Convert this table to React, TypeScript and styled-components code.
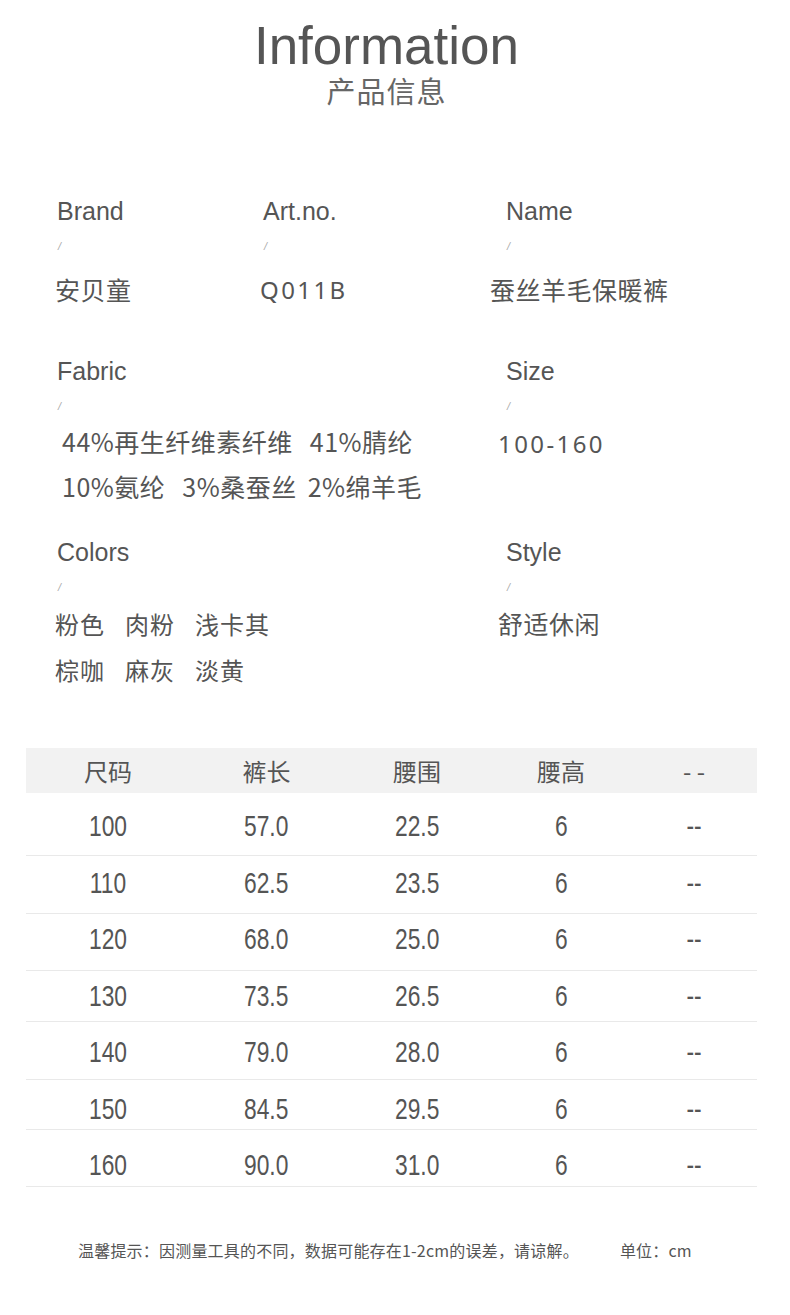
import styled, { createGlobalStyle } from "styled-components";

const GlobalStyle = createGlobalStyle`
  body {
    margin: 0;
    background: #ffffff;
    font-family: "Liberation Sans", "Noto Sans CJK SC", sans-serif;
    color: #555555;
  }
`;

const cjk = `"Noto Sans CJK SC", "Noto Sans", sans-serif`;

const sizeRows = [
  { h: 63, dy: 2, cells: ["100", "57.0", "22.5", "6", "--"] },
  { h: 58, dy: -2, cells: ["110", "62.5", "23.5", "6", "--"] },
  { h: 57, dy: -3, cells: ["120", "68.0", "25.0", "6", "--"] },
  { h: 51, dy: 0, cells: ["130", "73.5", "26.5", "6", "--"] },
  { h: 58, dy: 1, cells: ["140", "79.0", "28.0", "6", "--"] },
  { h: 50, dy: 4, cells: ["150", "84.5", "29.5", "6", "--"] },
  { h: 57, dy: 7, cells: ["160", "90.0", "31.0", "6", "--"] },
];

const headers = ["尺码", "裤长", "腰围", "腰高", "- -"];

export default function App() {
  return (
    <Page>
      <GlobalStyle />
      <Heading>
        <Title>Information</Title>
        <Subtitle>产品信息</Subtitle>
      </Heading>

      <InfoRow $gap={44}>
        <Field>
          <Label>Brand</Label>
          <Slash>/</Slash>
          <Value $shift={-2} $top={11}>安贝童</Value>
        </Field>
        <Field>
          <Label>Art.no.</Label>
          <Slash>/</Slash>
          <Value $shift={-3} $top={11} $latin>Q011B</Value>
        </Field>
        <Field $offset={8}>
          <Label>Name</Label>
          <Slash>/</Slash>
          <Value $shift={-16} $top={11}>蚕丝羊毛保暖裤</Value>
        </Field>
      </InfoRow>

      <InfoRow $gap={28}>
        <Field $span>
          <Label>Fabric</Label>
          <Slash>/</Slash>
          <Segments $top={3}>
            <span>44%再生纤维素纤维</span>
            <span>41%腈纶</span>
          </Segments>
          <Segments>
            <span>10%氨纶</span>
            <span>3%桑蚕丝</span>
            <Tail>2%绵羊毛</Tail>
          </Segments>
        </Field>
        <Field $offset={8}>
          <Label>Size</Label>
          <Slash>/</Slash>
          <Value $shift={-8} $top={5} $latin>100-160</Value>
        </Field>
      </InfoRow>

      <InfoRow $gap={55}>
        <Field $span>
          <Label>Colors</Label>
          <Slash>/</Slash>
          <ColorLine $top={4}>
            <span>粉色</span>
            <span>肉粉</span>
            <span>浅卡其</span>
          </ColorLine>
          <ColorLine>
            <span>棕咖</span>
            <span>麻灰</span>
            <span>淡黄</span>
          </ColorLine>
        </Field>
        <Field $offset={8}>
          <Label>Style</Label>
          <Slash>/</Slash>
          <Value $shift={-8} $top={4}>舒适休闲</Value>
        </Field>
      </InfoRow>

      <Table>
        <HeadRow>
          {headers.map((h) => (
            <HeadCell key={h}>{h}</HeadCell>
          ))}
        </HeadRow>
        {sizeRows.map((row) => (
          <DataRow key={row.cells[0]} $h={row.h} $dy={row.dy}>
            {row.cells.map((cell, i) => (
              <DataCell key={i}>
                <Narrow>{cell}</Narrow>
              </DataCell>
            ))}
          </DataRow>
        ))}
      </Table>

      <Footer>
        <span>温馨提示：因测量工具的不同，数据可能存在1-2cm的误差，请谅解。</span>
        <span>单位：cm</span>
      </Footer>
    </Page>
  );
}

const Page = styled.div`
  width: 790px;
  min-height: 1315px;
  background: #fff;
`;

const Heading = styled.header`
  display: flex;
  flex-direction: column;
  align-items: center;
  padding: 20px 17px 0 0;
  margin-bottom: 88px;
`;

const Title = styled.h1`
  margin: 0;
  font-family: "Liberation Sans", sans-serif;
  font-weight: 400;
  font-size: 53px;
  line-height: 52px;
  color: #555;
`;

const Subtitle = styled.div`
  font-family: ${cjk};
  font-size: 29px;
  line-height: 36px;
  color: #666;
  letter-spacing: 1px;
`;

const InfoRow = styled.section<{ $gap: number }>`
  display: grid;
  grid-template-columns: 206px 235px 1fr;
  padding-left: 57px;
  margin-bottom: ${({ $gap }) => $gap}px;
`;

const Field = styled.div<{ $span?: boolean; $offset?: number }>`
  display: flex;
  flex-direction: column;
  align-items: flex-start;
  grid-column: ${({ $span }) => ($span ? "span 2" : "auto")};
  padding-left: ${({ $offset }) => $offset ?? 0}px;
`;

const Label = styled.div`
  font-family: "Liberation Sans", sans-serif;
  font-size: 25px;
  line-height: 30px;
  color: #555;
`;

const Slash = styled.div`
  font-family: "Liberation Sans", sans-serif;
  font-size: 11px;
  line-height: 20px;
  margin-top: 10px;
  margin-left: 1px;
  color: #aaa;
  font-style: italic;
`;

const Value = styled.div<{ $shift: number; $top?: number; $latin?: boolean }>`
  font-family: ${({ $latin }) => ($latin ? `"Noto Sans", sans-serif` : cjk)};
  font-size: ${({ $latin }) => ($latin ? "24px" : "25px")};
  line-height: 45px;
  letter-spacing: ${({ $latin }) => ($latin ? "2.4px" : "0.5px")};
  color: #555;
  white-space: nowrap;
  margin-left: ${({ $shift }) => $shift}px;
  margin-top: ${({ $top }) => $top ?? 0}px;
`;

const Segments = styled.div<{ $top?: number }>`
  display: flex;
  gap: 17px;
  margin-left: 5px;
  margin-top: ${({ $top }) => $top ?? 0}px;
  font-family: ${cjk};
  font-size: 25px;
  line-height: 45px;
  letter-spacing: 0.5px;
  white-space: nowrap;
  color: #555;
`;

const Tail = styled.span`
  margin-left: -6px;
`;

const ColorLine = styled.div<{ $top?: number }>`
  display: flex;
  gap: 20px;
  margin-left: -2px;
  margin-top: ${({ $top }) => $top ?? 0}px;
  font-family: ${cjk};
  font-size: 24px;
  line-height: 46px;
  letter-spacing: 1px;
  color: #555;
`;

const Table = styled.div`
  margin: 0 33px 0 26px;
  font-family: ${cjk};
  color: #555;
`;

const cols = "164px 153px 148px 140px 1fr";

const HeadRow = styled.div`
  display: grid;
  grid-template-columns: ${cols};
  height: 45px;
  align-items: center;
  background: #f2f2f2;
`;

const HeadCell = styled.div`
  text-align: center;
  font-size: 24px;
  line-height: 45px;
  color: #555;
  white-space: pre;
`;

const DataRow = styled.div<{ $h: number; $dy: number }>`
  display: grid;
  grid-template-columns: ${cols};
  box-sizing: border-box;
  height: ${({ $h }) => $h}px;
  padding-top: ${({ $dy }) => Math.max(0, $dy * 2)}px;
  padding-bottom: ${({ $dy }) => Math.max(0, -$dy * 2)}px;
  align-items: center;
  border-bottom: 1px solid #e9e9e9;
`;

const DataCell = styled.div`
  text-align: center;
`;

const Narrow = styled.span`
  display: inline-block;
  font-family: "Liberation Sans", sans-serif;
  font-size: 30px;
  transform: scaleX(0.76);
  color: #555;
`;

const Footer = styled.footer`
  display: flex;
  gap: 41px;
  padding: 51px 0 0 78px;
  font-family: ${cjk};
  font-size: 16px;
  line-height: 24px;
  letter-spacing: 0.2px;
  color: #555;
`;
